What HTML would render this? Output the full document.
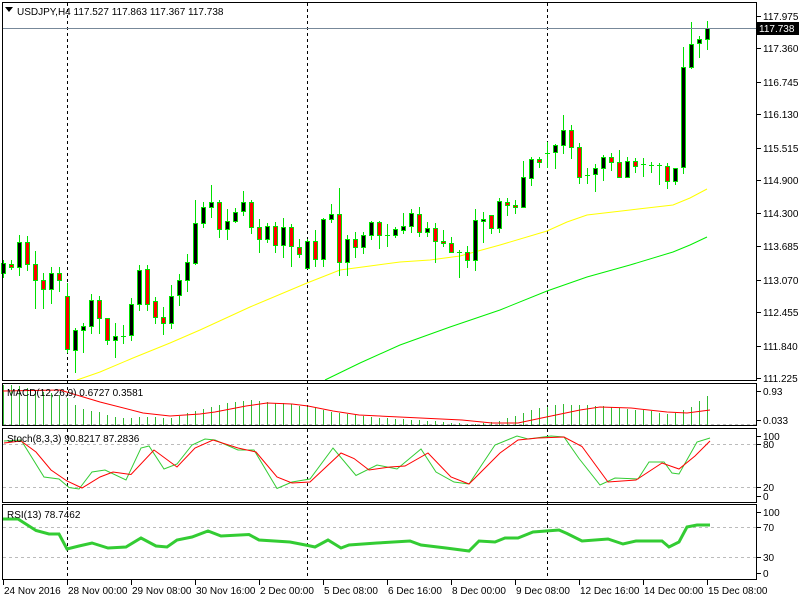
<!DOCTYPE html>
<html><head><meta charset="utf-8"><style>
html,body{margin:0;padding:0;background:#fff;width:800px;height:600px;overflow:hidden}
svg{display:block}
text{font-family:"Liberation Sans",sans-serif;font-size:10px;fill:#000}
</style></head><body>
<svg id="s" width="800" height="600" xmlns="http://www.w3.org/2000/svg">
<rect width="800" height="600" fill="#fff"/>
<g id="g"></g>
<g stroke="#000" fill="none" stroke-width="1">
<rect x="2.5" y="2.5" width="754" height="378"/>
<rect x="2.5" y="383.5" width="754" height="42"/>
<rect x="2.5" y="428.5" width="754" height="74"/>
<rect x="2.5" y="504.5" width="754" height="75"/>
</g>
<line x1="3" y1="28.5" x2="756" y2="28.5" stroke="#778899"/>
<rect x="757" y="22" width="42" height="13" fill="#000"/>
<text x="759" y="32" style="fill:#fff">117.738</text>
<g id="lbl"></g>
<path d="M5 7 L13 7 L9 12 Z" fill="#000"/>
<text x="17" y="15">USDJPY,H4  117.527 117.863 117.367 117.738</text>
<text x="7" y="396">MACD(12,26,9) 0.6727 0.3581</text>
<text x="7" y="442">Stoch(8,3,3) 90.8217 87.2836</text>
<text x="7" y="518">RSI(13) 78.7462</text>
</svg>
<script>
var g=document.getElementById('g'),L=document.getElementById('lbl'),h='',l='';
function line(x1,y1,x2,y2,c,w,d){h+='<line x1="'+x1+'" y1="'+y1+'" x2="'+x2+'" y2="'+y2+'" stroke="'+c+'" stroke-width="'+(w||1)+'"'+(d?' stroke-dasharray="'+d+'"':'')+'/>';}
function poly(p,c,w){var s=p.map(function(a){return a[0]+','+a[1]}).join(' ');h+='<polyline points="'+s+'" fill="none" stroke="'+c+'" stroke-width="'+w+'"/>';}
function txt(x,y,t){l+='<text x="'+x+'" y="'+y+'">'+t+'</text>';}
[[444],[487],[527],[557],[424]].forEach(function(a){line(3,a[0]+.5,756,a[0]+.5,'#bbb',1,'3,3');});
[67,307,547].forEach(function(x){line(x+.5,3,x+.5,580,'#000',1,'3,3');});
var hk=[[3,385],[11,385],[19,386],[27,388],[35,390],[43,392],[51,393],[59,395],[67,398],[75,405],[83,409],[91,411],[99,412],[107,415],[115,417],[123,418],[150,417],[170,418],[200,410],[230,402],[250,400],[280,403],[310,407],[330,412],[380,418],[430,421],[470,424],[500,421],[530,410],[560,404],[600,406],[640,410],[670,414],[690,408],[700,400],[707,396]];
function interp(k,x){for(var i=0;i<k.length-1;i++){if(x<=k[i+1][0]){var t=(x-k[i][0])/(k[i+1][0]-k[i][0]);return k[i][1]+t*(k[i+1][1]-k[i][1]);}}return k[k.length-1][1];}
for(var i=0;i<=88;i++){var x=3+8*i;var y=Math.round(interp(hk,x));line(x+.5,y,x+.5,425,'#33bb33',1);}
poly([[3,391],[60,390],[100,402],[143,413],[170,416],[200,414],[215,412],[246,406],[267,403],[292,404],[308,406],[333,411],[359,415],[410,417.5],[462,420],[492,423],[518,423],[544,417.5],[580,410],[600,407],[631,408],[667,412],[687,413],[710,410]],'#f00',1);
poly([[77,380],[100,372],[133,358],[170,343],[200,330],[250,307],[307,283],[340,270],[370,266],[400,262],[430,260],[460,256],[500,245],[547,231],[567,222],[587,215],[630,210],[673,205],[690,198],[707,189]],'#ffff00',1);
poly([[325,380],[360,363],[400,345],[450,327],[500,310],[547,291],[567,284],[587,277],[630,265],[673,252],[690,245],[707,237]],'#00ee00',1);
var C=[['b',263,273,260,277],['r',264,267,260,269],['b',242,267,235,275],['r',242,264,236,270],['r',264,280,251,308],['r',280,289,273,308],['b',273,289,267,303],['r',273,280,267,291],['r',296,349,283,352],['b',330,350,328,372],['b',326,330,323,352],['b',300,326,294,333],['r',300,318,296,333],['r',318,340,318,344],['b',336,340,323,357],['d',336,336,325,343],['b',304,335,298,340],['b',270,304,265,310],['r',269,304,265,310],['r',301,317,297,323],['r',317,323,307,334],['b',296,323,285,328],['b',280,295,274,305],['b',262,280,254,291],
['b',223,263,200,264],['b',207,223,202,227],['b',202,207,185,217],['r',202,229,200,237],['b',221,229,209,239],['b',212,221,208,222],['b',202,211,191,215],['r',202,227,200,233],['r',227,239,219,252],['b',226,239,223,242],['r',226,245,222,252],['b',227,245,218,257],['r',227,246,224,266],['r',247,254,239,257],['b',241,268,239,268],['r',241,259,230,266],['b',219,259,218,266],['b',214,219,204,222],['r',214,262,188,275],['b',239,262,235,275],['r',239,247,232,257],['b',235,247,232,253],['b',222,235,221,239],['r',222,235,221,248],['d',235,235,224,246],['b',229,235,227,237],
['b',226,230,213,233],['b',213,226,209,232],['r',214,232,207,236],['b',228,232,222,236],['r',228,241,223,262],['r',241,243,230,246],['r',243,252,237,252],['d',252,252,250,277],['r',252,260,246,267],['b',220,260,209,270],['b',219,221,212,242],['r',215,228,215,233],['b',201,228,198,232],['r',202,205,198,215],['r',205,207,200,213],['b',177,207,161,207],['b',159,178,157,185],['r',159,162,157,167],['d',153,153,142,167],['b',145,152,144,168],['b',130,145,115,153],['r',130,147,125,158],['r',147,177,143,183],['d',175,175,168,183],['b',168,174,164,191],['b',157,168,155,180],['r',157,162,153,170],['r',162,177,150,177],['b',161,177,157,177],['r',161,166,158,172],['d',164,164,158,176],['d',165,165,162,172],['d',165,165,163,184],['r',166,181,163,188],['b',168,181,168,184],['b',67,167,47,173],['b',44,67,22,68],['b',39,43,36,57],['b',28,39,21,49]];
C.forEach(function(c,i){var x=3+8*i;line(x+.5,c[3],x+.5,c[4]+1,'#00e000',1);
 if(c[0]=='d'){line(x-2,c[1]+.5,x+3,c[1]+.5,'#00e000',1);return;}
 var hh=Math.max(c[2]-c[1],2);h+='<rect x="'+(x-1.5)+'" y="'+(c[1]+.5)+'" width="4" height="'+hh+'" fill="'+(c[0]=='b'?'#000':'#f00')+'" stroke="#00e000" stroke-width="1"/>';});
poly([[4,441],[21,440],[44,477],[59,479],[69,487.5],[79,489],[92,472],[105,470],[126,480],[141,448],[149,446],[164,469],[177,464],[192,445],[205,439],[215,440],[238,450],[254,450],[277,488.5],[292,482],[310,479],[333,448],[356,475.5],[377,465],[397,469],[421,449],[436,472],[454,482],[469,484],[495,445],[517,436],[528,439],[551,436],[564,437],[579,458.5],[600,485],[615,478],[638,479],[649,462],[664,462],[672,473],[679,474],[697,442],[710,438]],'#33cc33',1);
poly([[4,443],[21,441],[36,452],[51,470],[67,481],[82,488],[100,477],[113,472],[131,474.5],[154,450],[177,467],[195,448],[213,440],[238,448],[256,452],[277,477],[292,483],[310,482],[341,453],[354,458.5],[369,470],[390,467],[405,466],[428,453],[451,477],[469,484],[500,453],[518,440],[538,438],[564,437],[582,446.5],[608,482],[636,480],[662,463],[679,469],[695,456],[710,441]],'#f00',1);
poly([[3,519],[18,519],[36,530.5],[49,534],[59,534],[67,549],[79,546],[92,543],[108,548],[126,547],[141,538],[156,546],[167,547],[177,540],[192,537],[208,531],[221,536],[249,534.5],[259,540],[290,542],[308,545.5],[315,547],[328,540],[341,548],[349,545],[377,543],[410,541],[421,545],[446,548],[469,551],[479,541],[495,542],[505,538],[518,538],[533,532],[559,530],[567,533.5],[582,541],[608,539],[623,544],[636,541],[662,541],[669,547],[679,542],[687,527],[697,525],[710,525]],'#33cc33',3);
var pr=[['117.975',16],['117.360',48],['116.745',82],['116.130',114],['115.515',148],['114.900',180],['114.300',213],['113.685',246],['113.070',280],['112.455',312],['111.840',346],['111.225',378],['0.93',391],['0.033',420],['100',436],['80',444],['20',487],['0',496],['100',512],['70',527],['30',557],['0',573]];
pr.forEach(function(p){line(757,p[1]+.5,761,p[1]+.5,'#000',1);txt(763,p[1]+4,p[0]);});
var d=[['24 Nov 2016',3],['28 Nov 00:00',67],['29 Nov 08:00',131],['30 Nov 16:00',195],['2 Dec 00:00',259],['5 Dec 08:00',323],['6 Dec 16:00',387],['8 Dec 00:00',451],['9 Dec 08:00',515],['12 Dec 16:00',579],['14 Dec 00:00',643],['15 Dec 08:00',707]];
d.forEach(function(a){line(a[1]+.5,580,a[1]+.5,585,'#000',1);txt(a[1]+1,594,a[0]);});
g.innerHTML=h;L.innerHTML=l;
</script>
</body></html>
